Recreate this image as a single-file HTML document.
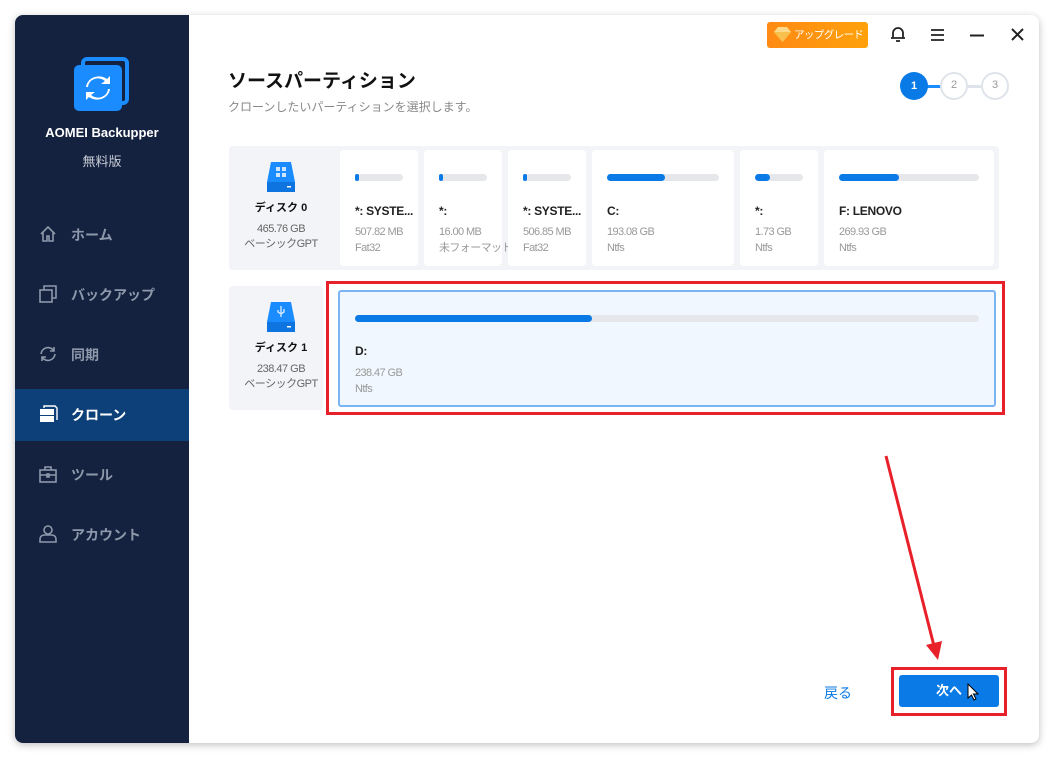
<!DOCTYPE html><html><head><meta charset="utf-8"><style>
*{margin:0;padding:0;box-sizing:border-box}
body{width:1054px;height:758px;background:#fff;font-family:"Liberation Sans","Noto Sans CJK JP",sans-serif;position:relative;overflow:hidden}
.win{position:absolute;left:15px;top:15px;width:1024px;height:728px;border-radius:8px;box-shadow:0 2px 8px rgba(0,0,0,.25);background:#fff;overflow:hidden}
.side{position:absolute;left:0;top:0;width:174px;height:728px;background:#14213f}
.abs{position:absolute}
.nav{position:absolute;left:0;width:174px;height:52px;color:#8e98ab;font-size:14px;font-weight:bold;line-height:52px;padding-left:56px}
.nav svg{position:absolute;left:24px;top:16px}
.card{position:absolute;background:#fff;border-radius:4px;top:4px;height:116px}
.bar{position:absolute;left:15px;top:24px;height:7px;border-radius:4px;background:#e5e7eb}
.bar i{display:block;height:7px;border-radius:4px;background:#0a7ae6}
.nm{position:absolute;left:15px;top:54px;font-size:12px;font-weight:bold;color:#222;white-space:nowrap;letter-spacing:-0.3px}
.sz{position:absolute;left:15px;top:74px;font-size:11px;color:#999;line-height:16px;white-space:nowrap;letter-spacing:-0.6px}
</style></head><body>
<div class="win">
<div class="side">
 <div class="abs" style="left:66px;top:42px;width:48px;height:48px;border:4px solid #1a8cff;border-radius:6px"></div>
 <div class="abs" style="left:59px;top:50px;width:48px;height:46px;background:#1a8cff;border-radius:5px"></div>
 <svg class="abs" style="left:67px;top:58px" width="32" height="30" viewBox="0 0 32 30"><path d="M6 14a10 9 0 0 1 17-6l-4 3h9V3l-3 3A13 12 0 0 0 4 14z" fill="#fff"/><path d="M26 16a10 9 0 0 1-17 6l4-3H4v8l3-3a13 12 0 0 0 21-8z" fill="#fff"/></svg>
 <div class="abs" style="left:0;width:174px;top:110px;text-align:center;color:#fff;font-size:13px;font-weight:bold">AOMEI Backupper</div>
 <div class="abs" style="left:0;width:174px;top:136px;text-align:center;color:#c8ccd5;font-size:13px">無料版</div>
 <div class="nav" style="top:194px"><svg width="18" height="18" viewBox="0 0 18 18" fill="none" stroke="#8e98ab" stroke-width="1.6"><path d="M2 9L9 2l7 7M4 7v9h4v-5h2v5h4V7"/></svg>ホーム</div>
 <div class="nav" style="top:254px"><svg width="18" height="18" viewBox="0 0 18 18" fill="none" stroke="#8e98ab" stroke-width="1.6"><rect x="1" y="5" width="12" height="12"/><path d="M5 5V1h12v12h-4"/></svg>バックアップ</div>
 <div class="nav" style="top:314px"><svg width="18" height="18" viewBox="0 0 18 18" fill="none" stroke="#8e98ab" stroke-width="1.6"><path d="M2 9a7 7 0 0 1 13-3M16 9a7 7 0 0 1-13 3M15 2v4h-4M3 16v-4h4"/></svg>同期</div>
 <div class="nav" style="top:374px;background:#0d4078;color:#fff"><svg width="20" height="18" viewBox="0 0 20 18"><rect x="1" y="4" width="14" height="6" fill="#fff"/><rect x="1" y="11" width="14" height="6" fill="#fff"/><path d="M5 3V1h11l2 2v12" fill="none" stroke="#fff" stroke-width="1.4"/></svg>クローン</div>
 <div class="nav" style="top:434px"><svg width="18" height="18" viewBox="0 0 18 18" fill="none" stroke="#8e98ab" stroke-width="1.6"><rect x="1" y="5" width="16" height="12"/><path d="M6 5V2h6v3M1 10h16M8 9h2v3H8z"/></svg>ツール</div>
 <div class="nav" style="top:494px"><svg width="18" height="18" viewBox="0 0 18 18" fill="none" stroke="#8e98ab" stroke-width="1.6"><circle cx="9" cy="5" r="4"/><path d="M1 17v-3a4 4 0 0 1 4-4h8a4 4 0 0 1 4 4v3z"/></svg>アカウント</div>
</div>
<div class="abs" style="left:752px;top:7px;width:101px;height:26px;border-radius:3px;background:linear-gradient(90deg,#ff8a14,#ffa10a);color:#fff;font-size:10.5px;line-height:26px;padding-left:27px;white-space:nowrap;letter-spacing:-0.6px">アップグレード</div>
<svg class="abs" style="left:759px;top:12px" width="17" height="15" viewBox="0 0 17 15"><path d="M4 0h9l4 5-8.5 10L0 5z" fill="#ffd98a"/><path d="M0 5h17L8.5 15z" fill="#f8c14d"/></svg>
<svg class="abs" style="left:875px;top:11px" width="16" height="17" viewBox="0 0 16 17" fill="none" stroke="#222" stroke-width="1.8"><path d="M3 12V7a5 5 0 0 1 10 0v5zM1 12h14M6 15h4"/></svg>
<svg class="abs" style="left:915px;top:13px" width="15" height="13"><path d="M1 2h13M1 7h13M1 12h13" stroke="#222" stroke-width="1.8"/></svg>
<svg class="abs" style="left:955px;top:19px" width="14" height="3"><path d="M0 1.5h14" stroke="#222" stroke-width="2"/></svg>
<svg class="abs" style="left:996px;top:13px" width="13" height="13"><path d="M1 1l11 11M12 1L1 12" stroke="#222" stroke-width="2"/></svg>
<div class="abs" style="left:213px;top:51px;font-size:19px;font-weight:bold;color:#111">ソースパーティション</div>
<div class="abs" style="left:213px;top:83px;font-size:12px;color:#888">クローンしたいパーティションを選択します。</div>
<div class="abs" style="left:897px;top:70px;width:88px;height:3px;background:#dfe3ea"></div>
<div class="abs" style="left:897px;top:70px;width:30px;height:3px;background:#1a8cff"></div>
<div class="abs" style="left:885px;top:57px;width:28px;height:28px;border-radius:50%;background:#0a7ae6;color:#fff;font-size:11px;font-weight:bold;text-align:center;line-height:28px">1</div>
<div class="abs" style="left:925px;top:57px;width:28px;height:28px;border-radius:50%;background:#fff;border:2.5px solid #dfe3ea;color:#999;font-size:11px;text-align:center;line-height:23px">2</div>
<div class="abs" style="left:966px;top:57px;width:28px;height:28px;border-radius:50%;background:#fff;border:2.5px solid #dfe3ea;color:#999;font-size:11px;text-align:center;line-height:23px">3</div>
<div class="abs" style="left:214px;top:131px;width:770px;height:124px;background:#f2f4f7;border-radius:4px">
 <svg class="abs" style="left:38px;top:16px" width="28" height="30" viewBox="0 0 28 30"><path d="M4 0h20l4 20v8H0v-8z" fill="#1a8cff"/><rect x="0" y="20" width="28" height="10" fill="#0d74e0"/><rect x="9" y="5" width="4" height="4" fill="#cfe6ff"/><rect x="15" y="5" width="4" height="4" fill="#cfe6ff"/><rect x="9" y="11" width="4" height="4" fill="#cfe6ff"/><rect x="15" y="11" width="4" height="4" fill="#cfe6ff"/><rect x="20" y="24" width="4" height="1.5" fill="#fff"/></svg>
 <div class="abs" style="left:0;width:104px;top:53px;text-align:center;font-size:11px;font-weight:bold;color:#111">ディスク 0</div>
 <div class="abs" style="left:0;width:104px;top:76px;text-align:center;font-size:11px;color:#666;line-height:15px;letter-spacing:-0.5px">465.76 GB<br>ベーシックGPT</div>
 <div class="card" style="left:111px;width:78px"><div class="bar" style="width:48px"><i style="width:4px"></i></div><div class="nm">*: SYSTE...</div><div class="sz">507.82 MB<br>Fat32</div></div>
 <div class="card" style="left:195px;width:78px"><div class="bar" style="width:48px"><i style="width:4px"></i></div><div class="nm">*:</div><div class="sz">16.00 MB<br>未フォーマット</div></div>
 <div class="card" style="left:279px;width:78px"><div class="bar" style="width:48px"><i style="width:4px"></i></div><div class="nm">*: SYSTE...</div><div class="sz">506.85 MB<br>Fat32</div></div>
 <div class="card" style="left:363px;width:142px"><div class="bar" style="width:112px"><i style="width:58px"></i></div><div class="nm">C:</div><div class="sz">193.08 GB<br>Ntfs</div></div>
 <div class="card" style="left:511px;width:78px"><div class="bar" style="width:48px"><i style="width:15px"></i></div><div class="nm">*:</div><div class="sz">1.73 GB<br>Ntfs</div></div>
 <div class="card" style="left:595px;width:170px"><div class="bar" style="width:140px"><i style="width:60px"></i></div><div class="nm">F: LENOVO</div><div class="sz">269.93 GB<br>Ntfs</div></div>
</div>
<div class="abs" style="left:214px;top:271px;width:94px;height:124px;background:#f2f4f7;border-radius:4px">
 <svg class="abs" style="left:38px;top:16px" width="28" height="30" viewBox="0 0 28 30"><path d="M4 0h20l4 20v8H0v-8z" fill="#1a8cff"/><rect x="0" y="20" width="28" height="10" fill="#0d74e0"/><path d="M14 4v11M11 8v2l3 2M17 7v3l-3 2" stroke="#cfe6ff" stroke-width="1.4" fill="none"/><rect x="20" y="24" width="4" height="1.5" fill="#fff"/></svg>
 <div class="abs" style="left:0;width:104px;top:53px;text-align:center;font-size:11px;font-weight:bold;color:#111">ディスク 1</div>
 <div class="abs" style="left:0;width:104px;top:76px;text-align:center;font-size:11px;color:#666;line-height:15px;letter-spacing:-0.5px">238.47 GB<br>ベーシックGPT</div>
</div>
<div class="abs" style="left:311px;top:266px;width:679px;height:134px;border:3px solid #e8202a"></div>
<div class="abs" style="left:323px;top:275px;width:658px;height:117px;background:#f1f7fe;border:2px solid #7ab4f5;border-radius:3px">
 <div class="bar" style="left:15px;top:23px;width:624px"><i style="width:237px"></i></div>
 <div class="nm" style="top:52px">D:</div><div class="sz" style="top:73px">238.47 GB<br>Ntfs</div>
</div>
<svg class="abs" style="left:860px;top:430px" width="70" height="230"><path d="M11 11L60 205" stroke="#e8202a" stroke-width="3"/><path d="M51 200l12 15 4-19z" fill="#e8202a"/></svg>
<div class="abs" style="left:809px;top:668px;font-size:14px;color:#0a7ae6">戻る</div>
<div class="abs" style="left:876px;top:652px;width:116px;height:49px;border:3px solid #e8202a"></div>
<div class="abs" style="left:884px;top:660px;width:100px;height:32px;background:#0a7ae6;border-radius:3px;color:#fff;font-size:13px;font-weight:bold;text-align:center;line-height:32px">次へ</div>
<svg class="abs" style="left:952px;top:668px" width="12" height="18" viewBox="0 0 12 18"><path d="M1 1v14l3.5-3 2.5 5 2-1-2.5-5H11z" fill="#fff" stroke="#000" stroke-width="1"/></svg>
</div>
</body></html>
